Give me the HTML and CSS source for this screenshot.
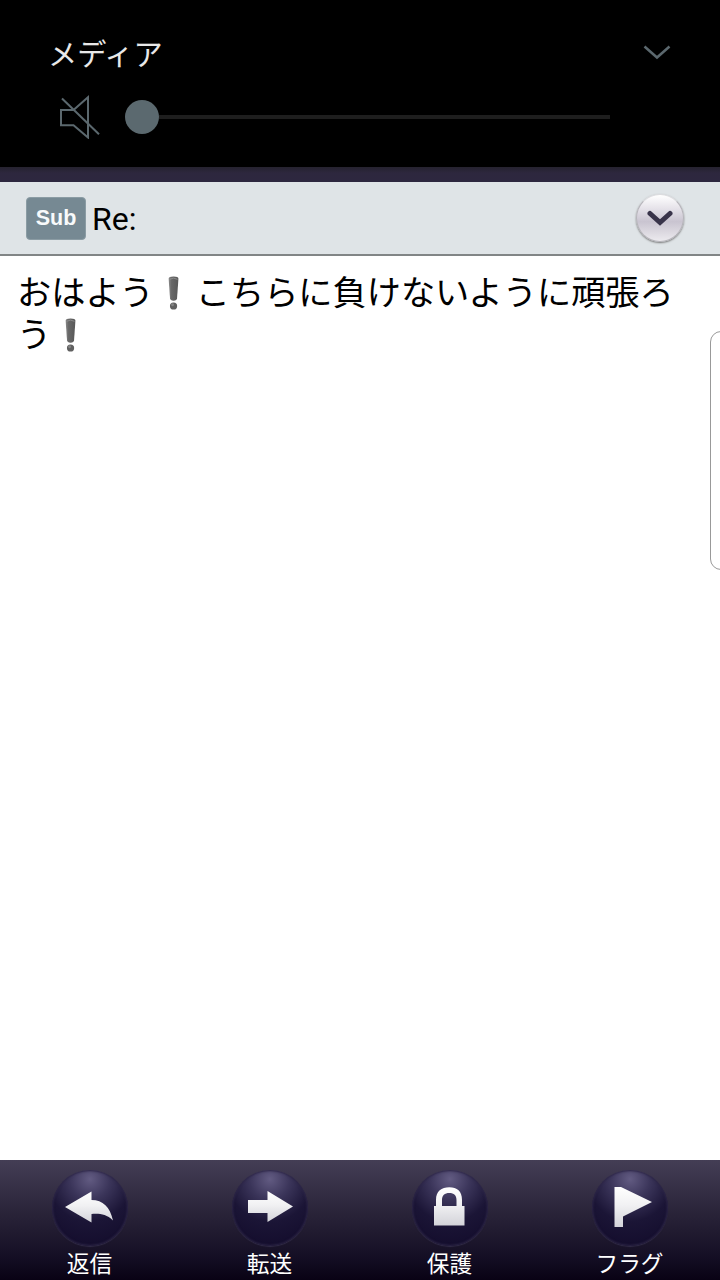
FILE: index.html
```html
<!DOCTYPE html>
<html lang="ja">
<head>
  <meta charset="UTF-8" />
  <meta name="viewport" content="width=device-width, initial-scale=1.0" />
  <title>Re:</title>
  <link rel="stylesheet" href="styles.css">
</head>
<body>
  <!-- shared gradients and the exclamation mark -->
  <svg class="defs" width="0" height="0">
    <defs>
      <linearGradient id="white" x1="0" y1="0" x2="0" y2="1">
        <stop offset="0" stop-color="#ffffff" />
        <stop offset="0.45" stop-color="#f1f1f3" />
        <stop offset="1" stop-color="#d3d3d9" />
      </linearGradient>
      <linearGradient id="bar" x1="0" y1="0" x2="1" y2="0">
        <stop offset="0" stop-color="#8a8a8a" />
        <stop offset="0.3" stop-color="#686868" />
        <stop offset="1" stop-color="#585858" />
      </linearGradient>
      <symbol id="bang" viewBox="0 0 43 42">
        <path d="M15 6.5Q15 4 20 4Q25 4 25 6.5L23.6 26.5Q23.4 29 20 29Q16.6 29 16.4 26.5Z" fill="url(#bar)" />
        <path d="M16 7Q20 4.5 24 7" fill="none" stroke="#969696" stroke-width="0.8" />
        <circle cx="20" cy="34.3" r="3.7" fill="#606060" />
        <circle cx="19" cy="33" r="1.5" fill="#858585" />
      </symbol>
    </defs>
  </svg>

  <section class="volume-panel">
    <div class="volume-title">
      <span>メディア</span>
      <svg class="chevron" width="28" height="16" viewBox="0 0 28 16">
        <path d="M1.5 1.5L14 12.5L26.5 1.5" />
      </svg>
    </div>
    <div class="volume-row">
      <svg class="mute" width="42" height="44" viewBox="0 0 42 44">
        <path d="M3 15H15.5L30 2.3V42.5L15.5 30.3H3Z" />
        <path d="M4 3.500L41 39.3" />
      </svg>
      <div class="slider">
        <div class="knob"></div>
        <div class="track"></div>
      </div>
    </div>
  </section>

  <div class="title-strip"></div>

  <header class="subject">
    <span class="sub-badge">Sub</span>
    <h1>Re:</h1>
    <button class="btn-expand" aria-label="詳細">
      <svg width="26" height="18" viewBox="0 0 26 18">
        <path d="M3 4.5L13 13.5L23 4.5" />
      </svg>
    </button>
  </header>

  <main class="message">
    <p>おはよう<svg class="bang"><use href="#bang" /></svg>こちらに負けないように頑張ろう<svg class="bang"><use href="#bang" /></svg></p>
    <div class="edge-handle"></div>
  </main>

  <nav class="toolbar">
    <a class="tool">
      <span class="orb">
        <svg width="76" height="76" viewBox="0 0 76 76">
          <path d="M13 37L39.500 21.500V30C51 30 58 37 61 50.500C54 44 48 43.500 39.500 44V52.500Z" fill="url(#white)" />
        </svg>
      </span>
      <span>返信</span>
    </a>
    <a class="tool">
      <span class="orb">
        <svg width="76" height="76" viewBox="0 0 76 76">
          <path d="M16 30H35.500V21L61 36.500L35.500 52V43H16Z" fill="url(#white)" />
        </svg>
      </span>
      <span>転送</span>
    </a>
    <a class="tool">
      <span class="orb">
        <svg width="76" height="76" viewBox="0 0 76 76">
          <path d="M22 36H24V30C24 21 29.500 17.300 37.300 17.300S50 21 50 30V36H52.500V55.500H22ZM30 36H44.500V30C44.500 25.500 42 23 37.300 23S30 25.500 30 30Z" fill="url(#white)" fill-rule="evenodd" />
        </svg>
      </span>
      <span>保護</span>
    </a>
    <a class="tool">
      <span class="orb">
        <svg width="76" height="76" viewBox="0 0 76 76">
          <path d="M22.500 17H29L60 32L31 46.500V57H22.500Z" fill="url(#white)" />
        </svg>
      </span>
      <span>フラグ</span>
    </a>
  </nav>
</body>
</html>
```
FILE: styles.css
```css
* {
  box-sizing: border-box;
}

body {
  margin: 0;
  height: 1280px;
  display: flex;
  flex-direction: column;
  overflow: hidden;
  background-color: #fff;
  font-family: Roboto, "Noto Sans CJK JP", sans-serif;
}

.defs {
  position: absolute;
}

/* volume */
.volume-panel {
  height: 167px;
  background-color: #000;
}

.volume-title {
  display: flex;
  justify-content: space-between;
  align-items: center;
  height: 44px;
  margin: 31px 49px 0 48px;
  color: #e8e8e8;
  font-size: 29.2px;
}

.volume-title span {
  margin-top: -3px;
}

.chevron,
.mute {
  fill: none;
  stroke: #5b686e;
  stroke-width: 2;
}

.chevron {
  stroke-width: 2.5;
}

.volume-row {
  display: flex;
  align-items: center;
  height: 44px;
  margin: 20px 110px 0 58px;
}

.slider {
  flex: 1;
  display: flex;
  align-items: center;
  margin-left: 25px;
}

.knob {
  width: 34px;
  height: 34px;
  border-radius: 50%;
  background-color: #5b696f;
}

.track {
  flex: 1;
  height: 4px;
  background-color: #1e1e1e;
}

.title-strip {
  height: 15px;
  background: linear-gradient(#25222f, #2d273e 40%, #2d273f);
}

/* subject */
.subject {
  display: flex;
  align-items: center;
  height: 74px;
  padding: 0 36px 0 26px;
  background-color: #dfe4e7;
  border-bottom: 2px solid #818586;
}

.sub-badge {
  width: 60px;
  height: 43px;
  border: 1px solid #8b9ca4;
  border-radius: 4px;
  background-color: #768993;
  color: #f8fafb;
  font: bold 21.5px/40px "Liberation Sans", sans-serif;
  text-align: center;
}

.subject h1 {
  flex: 1;
  margin: 1px 0 0 6px;
  font-size: 32px;
  font-weight: 400;
}

.btn-expand {
  display: flex;
  justify-content: center;
  align-items: center;
  width: 48px;
  height: 48px;
  padding: 0;
  border: 1px solid #b5b3b9;
  border-top-color: #dcdcdf;
  border-radius: 50%;
  background: linear-gradient(#fff, #e5e2e9 30%, #c9c4d0 58%, #eceaee);
  box-shadow: 0 1px 2px #777;
}

.btn-expand svg {
  fill: none;
  stroke: #39344a;
  stroke-width: 5;
  stroke-linecap: round;
}

/* message */
.message {
  flex: 1;
  position: relative;
  padding: 16px 36px 0 17px;
}

.message p {
  margin: 0;
  font-size: 34.2px;
  line-height: 42px;
}

.bang {
  width: 42px;
  height: 42px;
  vertical-align: top;
}

.edge-handle {
  position: absolute;
  top: 75px;
  right: -12px;
  width: 22px;
  height: 239px;
  border: 1px solid #999;
  border-radius: 12px;
}

/* bottom toolbar */
.toolbar {
  display: flex;
  height: 120px;
  background: linear-gradient(#443e55, #292338 45%, #150f25 80%, #090214);
}

.tool {
  flex: 1;
  display: flex;
  flex-direction: column;
  align-items: center;
  padding: 10px 1px 0 0;
  color: #fff;
  font-size: 22.7px;
  line-height: 37px;
}

.orb {
  width: 76px;
  height: 76px;
  border-radius: 50%;
  background: radial-gradient(circle at 50% 12%, #625b82 0, #3b355a 26%, #1b1536 55%, #110a29 100%);
  box-shadow: inset 0 0 2px 1px #2c2546, 0 1px 1px #332d49;
}

.orb svg {
  display: block;
}
```
